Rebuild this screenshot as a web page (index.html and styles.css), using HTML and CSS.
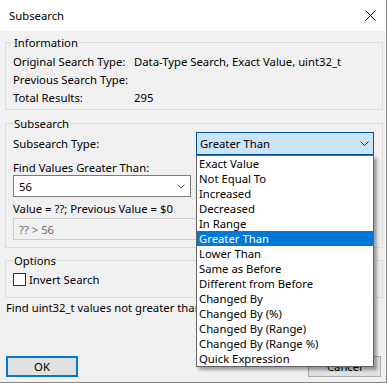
FILE: index.html
```html
<!DOCTYPE html>
<html>
<head>
    <title>Subsearch</title>
    <link rel="stylesheet" href="styles.css">
</head>
<body>

    <div class="window">
        <!-- Title bar -->
        <div class="titlebar">
            <span class="title">Subsearch</span>
            <svg class="close" width="11" height="11" viewBox="0 0 11 11">
                <path d="M0.5 0.5L10.5 10.5M10.5 0.5L0.5 10.5" stroke="#000" stroke-width="1" fill="none"/>
            </svg>
        </div>

        <div class="client">
            <fieldset class="group info">
                <legend>Information</legend>
                <div class="info-grid">
                    <span>Original Search Type:</span><span>Data-Type Search, Exact Value, uint32_t</span>
                    <span>Previous Search Type:</span><span></span>
                    <span>Total Results:</span><span>295</span>
                </div>
            </fieldset>

            <fieldset class="group subsearch">
                <legend>Subsearch</legend>
                <div class="type-row">
                    <span>Subsearch Type:</span>
                    <div class="select open">
                        <span>Greater Than</span>
                        <svg width="9" height="5" viewBox="0 0 9 5"><path d="M0.5 0.5L4.5 4.5L8.5 0.5" stroke="#333" fill="none"/></svg>
                    </div>
                </div>
                <div class="label find">Find Values Greater Than:</div>
                <div class="combo">
                    <span>56</span>
                    <svg width="8" height="5" viewBox="0 0 8 5"><path d="M0.5 0.5L4 4L7.5 0.5" stroke="#606060" fill="none"/></svg>
                </div>
                <div class="label value">Value = ??; Previous Value = $0</div>
                <div class="expr">?? &gt; 56</div>
            </fieldset>

            <fieldset class="group options">
                <legend>Options</legend>
                <label class="check-row">
                    <span class="checkbox"></span>
                    <span>Invert Search</span>
                </label>
            </fieldset>

            <div class="status">Find uint32_t values not greater than 56.</div>

            <div class="buttons">
                <button class="btn default">OK</button>
                <button class="btn">Cancel</button>
            </div>
        </div>

        <!-- open list of the Subsearch Type box -->
        <ul class="dropdown">
            <li>Exact Value</li>
            <li>Not Equal To</li>
            <li>Increased</li>
            <li>Decreased</li>
            <li>In Range</li>
            <li class="selected">Greater Than</li>
            <li>Lower Than</li>
            <li>Same as Before</li>
            <li>Different from Before</li>
            <li>Changed By</li>
            <li>Changed By (%)</li>
            <li>Changed By (Range)</li>
            <li>Changed By (Range %)</li>
            <li>Quick Expression</li>
        </ul>
    </div>

</body>
</html>
```

FILE: styles.css
```css
    body {
        margin: 0;
        padding: 0;
        font-family: "Noto Sans", sans-serif;
        font-size: 11.3px;
        color: #000;
        background: #fff;
    }

    .window {
        position: relative;
        width: 387px;
        height: 383px;
        box-sizing: border-box;
        border-right: 1px solid #858585;
        border-bottom: 1px solid #858585;
        background: #f0f0f0;
        display: flex;
        flex-direction: column;
        white-space: nowrap;
    }

    .titlebar {
        height: 31px;
        background: #fff;
        display: flex;
        align-items: center;
        justify-content: space-between;
        padding: 0 10px 0 9px;
        flex-shrink: 0;
    }

    .title {
        line-height: 15px;
    }

    .client {
        flex: 1;
        display: flex;
        flex-direction: column;
        padding: 4px 3px 5px 5px;
    }

    .group {
        margin: 0;
        border: 1px solid #dcdcdc;
        padding: 0 8px 0 7px;
        min-width: 0;
    }

    .group legend {
        padding: 0 1px;
        line-height: 15px;
    }

    .info {
        padding-top: 2px;
        padding-bottom: 3px;
    }

    .info-grid {
        display: grid;
        grid-template-columns: 121px 1fr;
        grid-auto-rows: 18px;
        align-items: center;
        line-height: 15px;
    }

    .subsearch {
        margin-top: 6px;
        padding-top: 1px;
        padding-bottom: 7px;
    }

    .type-row {
        display: flex;
        justify-content: space-between;
        align-items: center;
        height: 23px;
    }

    .select {
        width: 178px;
        height: 23px;
        box-sizing: border-box;
        display: flex;
        align-items: center;
        justify-content: space-between;
        padding: 0 4px 0 3px;
        border: 1px solid #d9d9d9;
    }

    .select.open {
        background: #cce4f7;
        border-color: #005499;
    }

    .label {
        line-height: 15px;
    }

    .find {
        margin-top: 5px;
    }

    .combo {
        width: 178px;
        height: 22px;
        box-sizing: border-box;
        background: #fff;
        border: 1px solid #7a7a7a;
        display: flex;
        align-items: center;
        justify-content: space-between;
        padding: 0 5px 0 5px;
    }

    .value {
        margin-top: 4px;
    }

    .expr {
        margin-top: 2px;
        height: 22px;
        box-sizing: border-box;
        border: 1px solid #cccccc;
        color: #6d6d6d;
        padding: 0 5px;
        display: flex;
        align-items: center;
    }

    .options {
        margin-top: 5px;
        padding-top: 4px;
        padding-bottom: 10px;
    }

    .check-row {
        display: flex;
        align-items: center;
        gap: 3px;
        height: 15px;
        line-height: 15px;
    }

    .checkbox {
        width: 13px;
        height: 13px;
        box-sizing: border-box;
        border: 1px solid #333;
        background: #fff;
    }

    .status {
        margin-top: 2px;
        padding-left: 1px;
        line-height: 15px;
    }

    .buttons {
        margin-top: auto;
        display: flex;
        justify-content: space-between;
        padding: 0 2px 0 1px;
    }

    .btn {
        width: 73px;
        height: 21px;
        box-sizing: border-box;
        font-family: inherit;
        font-size: 11.3px;
        color: #000;
        background: #e1e1e1;
        border: 1px solid #adadad;
        border-radius: 0;
        padding: 0;
    }

    .btn.default {
        width: 72px;
        border: 2px solid #0078d7;
    }

    .dropdown {
        position: absolute;
        left: 196px;
        top: 155px;
        width: 178px;
        box-sizing: border-box;
        margin: 0;
        padding: 0;
        list-style: none;
        background: #fff;
        border: 1px solid #646464;
        box-shadow: 3px 3px 3px rgba(0, 0, 0, 0.35);
    }

    .dropdown li {
        height: 15px;
        line-height: 15px;
        padding-left: 2px;
    }

    .dropdown li.selected {
        background: #0078d7;
        color: #fff;
    }
```
